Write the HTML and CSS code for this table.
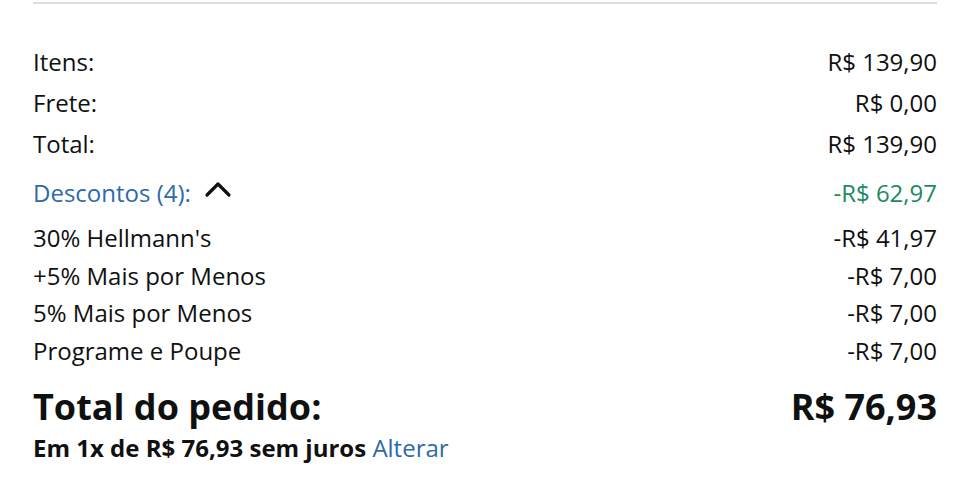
FILE: index.html
```html
<!DOCTYPE html>
<html lang="pt-BR">
<head>
<meta charset="utf-8">
<link rel="stylesheet" href="styles.css">
</head>
<body>
<div class="summary">
  <div class="rule"></div>
  <div class="rows">
    <div class="row"><span>Itens:</span><span>R$ 139,90</span></div>
    <div class="row"><span>Frete:</span><span>R$ 0,00</span></div>
    <div class="row"><span>Total:</span><span>R$ 139,90</span></div>
  </div>
  <div class="row discount-head">
    <span class="toggle"><span class="link">Descontos (4):</span>
      <svg class="chev" width="28" height="18" viewBox="0 0 28 18"><path d="M3 15 L14 4 L25 15" fill="none" stroke="#0f1111" stroke-width="3.2" stroke-linecap="round" stroke-linejoin="round"/></svg>
    </span>
    <span class="green">-R$ 62,97</span>
  </div>
  <div class="discounts">
    <div class="row"><span>30% Hellmann's</span><span>-R$ 41,97</span></div>
    <div class="row"><span>+5% Mais por Menos</span><span>-R$ 7,00</span></div>
    <div class="row"><span>5% Mais por Menos</span><span>-R$ 7,00</span></div>
    <div class="row"><span>Programe e Poupe</span><span>-R$ 7,00</span></div>
  </div>
  <div class="row grand"><span>Total do pedido:</span><span>R$ 76,93</span></div>
  <div class="install">Em 1x de R$ 76,93 sem juros <span class="link normal">Alterar</span></div>
</div>
</body>
</html>
```
FILE: styles.css
```css
html, body {
  margin: 0;
  padding: 0;
  background: #fff;
}
body {
  font-family: "Open Sans", "Noto Sans", sans-serif;
  color: #0f1111;
  font-size: 24px;
}
.summary {
  margin: 0 40px 0 33px;
  padding-top: 2px;
}
.rule {
  height: 2px;
  background: #dcdcdc;
}
.rows {
  margin-top: 43px;
}
.row {
  display: flex;
  justify-content: space-between;
  align-items: center;
  line-height: 30px;
}
.rows .row {
  margin-bottom: 11px;
}
.discount-head {
  margin-top: 15px;
  height: 38px;
}
.toggle {
  display: flex;
  align-items: center;
  gap: 13px;
}
.link {
  color: #2f6aa8;
}
.chev {
  margin-top: -8px;
}
.green {
  color: #1d8a5f;
}
.discounts {
  margin-top: 11px;
}
.discounts .row {
  line-height: 30px;
  margin-bottom: 7.5px;
}
.grand {
  font-weight: 700;
  font-size: 36px;
  line-height: 44px;
  margin-top: 19px;
}
.install {
  font-weight: 700;
  font-size: 24px;
  line-height: 30px;
  margin-top: 4px;
}
.normal {
  font-weight: 400;
}
```
